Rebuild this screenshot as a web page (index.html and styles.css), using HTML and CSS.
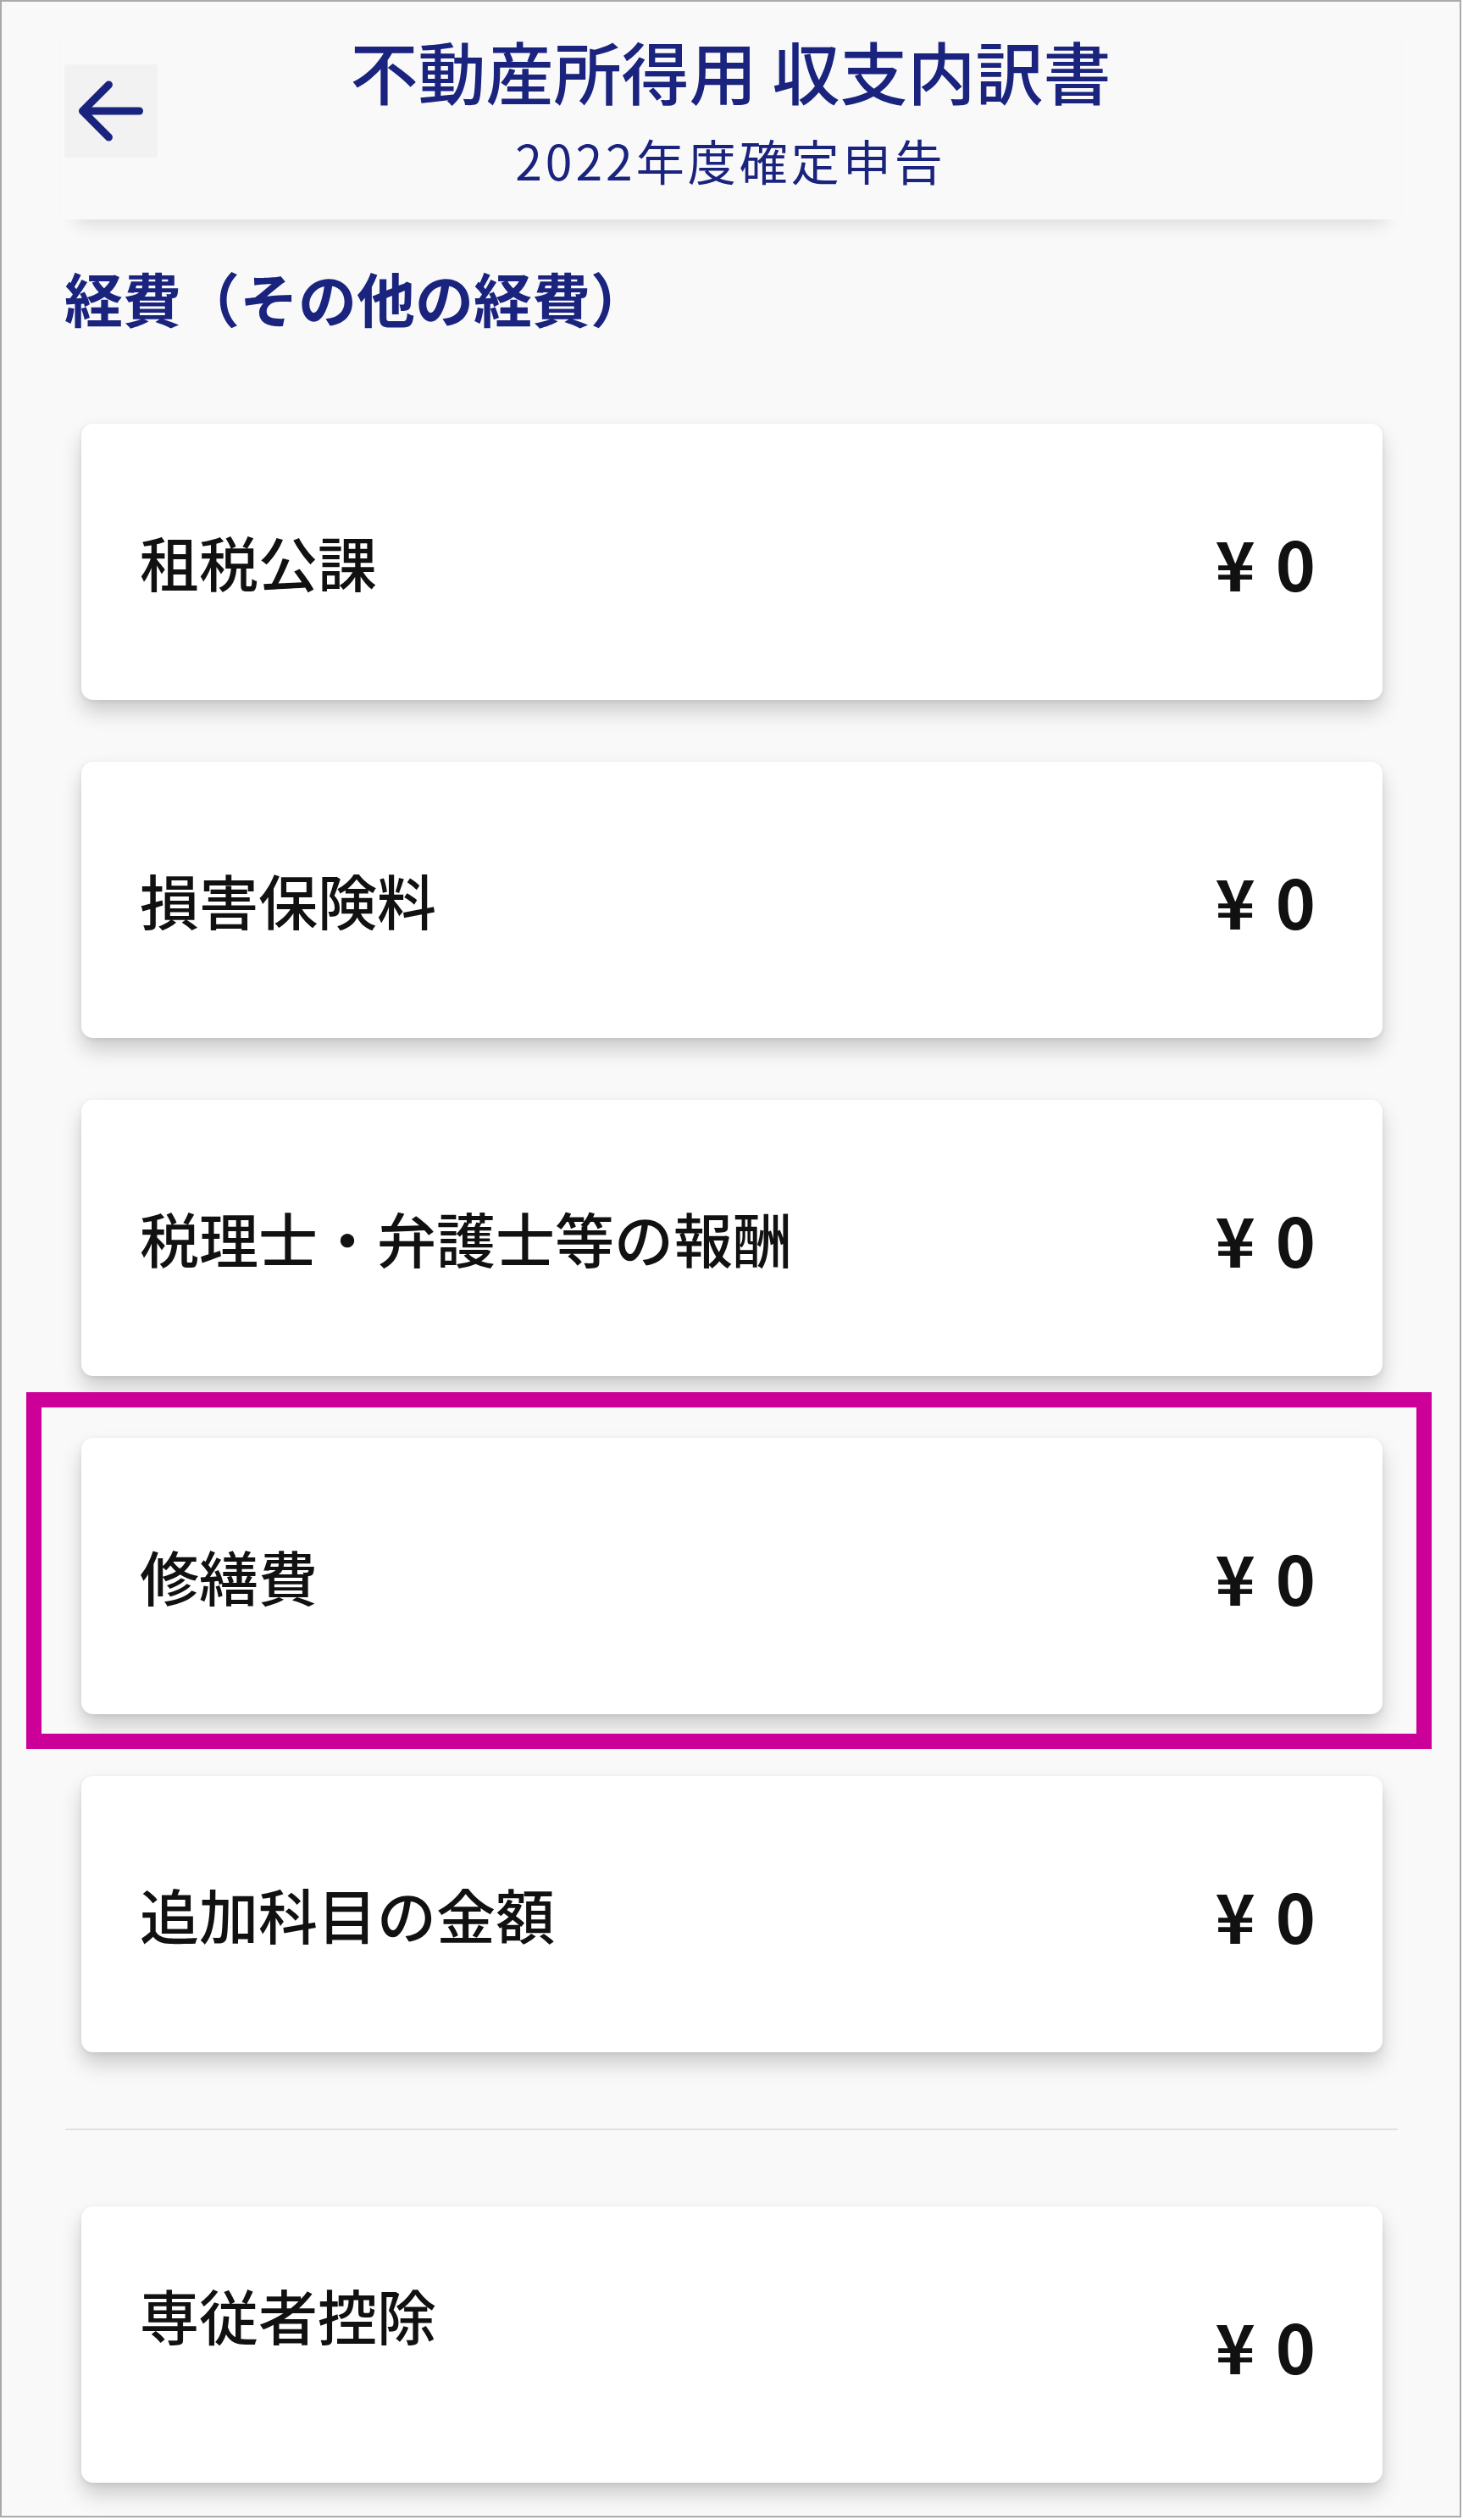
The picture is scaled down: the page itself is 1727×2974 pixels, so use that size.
FILE: index.html
```html
<!DOCTYPE html>
<html lang="ja">
<head>
    <meta charset="utf-8">
    <meta name="viewport" content="width=device-width, initial-scale=1.0">
    <title>不動産所得用 収支内訳書</title>
    <link rel="stylesheet" href="styles.css">
</head>
<body>
    <div class="screen">
        <!-- App bar -->
        <header class="app-bar">
            <button class="back-button" type="button" aria-label="戻る">
                <svg viewBox="0 0 512 512" width="110" height="110">
                    <polyline points="244 400 100 256 244 112" fill="none" stroke="currentColor" stroke-linecap="round" stroke-linejoin="round" stroke-width="42"/>
                    <line x1="120" y1="256" x2="412" y2="256" fill="none" stroke="currentColor" stroke-linecap="round" stroke-linejoin="round" stroke-width="42"/>
                </svg>
            </button>
            <div class="titles">
                <h1>不動産所得用 収支内訳書</h1>
                <p>2022年度確定申告</p>
            </div>
            <span></span>
        </header>

        <main class="content">
            <h2 class="section-title">経費（その他の経費）</h2>

            <ul class="items">
                <li class="item">
                    <span class="item-name">租税公課</span>
                    <span class="item-amount">¥ 0</span>
                </li>
                <li class="item">
                    <span class="item-name">損害保険料</span>
                    <span class="item-amount">¥ 0</span>
                </li>
                <li class="item">
                    <span class="item-name">税理士・弁護士等の報酬</span>
                    <span class="item-amount">¥ 0</span>
                </li>
                <!-- highlighted row -->
                <li class="item is-marked">
                    <span class="item-name">修繕費</span>
                    <span class="item-amount">¥ 0</span>
                </li>
                <li class="item">
                    <span class="item-name">追加科目の金額</span>
                    <span class="item-amount">¥ 0</span>
                </li>
            </ul>

            <hr class="divider">

            <ul class="items">
                <li class="item">
                    <div class="item-text">
                        <span class="item-name">専従者控除</span>
                        <span class="item-note"></span>
                    </div>
                    <span class="item-amount">¥ 0</span>
                </li>
            </ul>
        </main>
    </div>
</body>
</html>
```

FILE: styles.css
```css
/* Reset */
body, html {
    margin: 0;
    background: #ffffff;
}

body {
    font-family: "Noto Sans CJK JP", "Noto Sans", sans-serif;
}

/* Phone frame */
.screen {
    width: 1725px;
    height: 2971px;
    box-sizing: border-box;
    border: 2px solid #aaaaaa;
    background-color: #f9f9f9;
    overflow: hidden;
}

/* App bar */
.app-bar {
    display: grid;
    grid-template-columns: 1fr auto 1fr;
    margin: 0 70px;
    padding: 30px 4px 36px;
    box-shadow: 0 22px 22px -18px rgba(0, 0, 0, 0.14);
}

.back-button {
    justify-self: start;
    width: 110px;
    height: 110px;
    margin-top: 44px;
    padding: 0;
    border: none;
    background-color: #f2f2f2;
    color: #1a237e;
    cursor: pointer;
}

.back-button svg {
    display: block;
}

.titles {
    text-align: center;
    color: #1a237e;
}

.titles h1 {
    margin: 0;
    font-size: 80px;
    line-height: 100px;
    font-weight: 500;
}

.titles p {
    margin: 21px 0 0;
    font-size: 57px;
    line-height: 70px;
    font-weight: 400;
    letter-spacing: 4px;
}

/* Content */
.section-title {
    margin: 47px 0 0 74px;
    font-size: 69px;
    line-height: 90px;
    font-weight: 700;
    color: #1a237e;
}

.items {
    list-style: none;
    margin: 104px 91px 0 94px;
    padding: 0;
    display: flex;
    flex-direction: column;
    gap: 73px;
}

.item {
    position: relative;
    height: 326px;
    box-sizing: border-box;
    display: flex;
    align-items: center;
    justify-content: space-between;
    padding: 0 76px 0 69px;
    background: #ffffff;
    border-radius: 14px;
    box-shadow: 0 14px 24px rgba(0, 0, 0, 0.18), 0 2px 6px rgba(0, 0, 0, 0.08);
}

.item-name {
    font-size: 70px;
    line-height: 1.4;
    font-weight: 500;
    color: #111111;
}

.item-text {
    display: flex;
    flex-direction: column;
}

.item-note {
    height: 71px;
}

.item-amount {
    font-size: 80px;
    line-height: 1.2;
    font-weight: 700;
    color: #111111;
    letter-spacing: 3px;
}

/* Annotation frame around a row */
.is-marked::after {
    content: "";
    position: absolute;
    left: -65px;
    top: -54px;
    right: -58px;
    bottom: -41px;
    border: 18px solid #cc0099;
    pointer-events: none;
}

.divider {
    margin: 90px 73px 0 75px;
    border: none;
    height: 2px;
    background-color: #e2e2e2;
}

.divider + .items {
    margin-top: 90px;
}
```
